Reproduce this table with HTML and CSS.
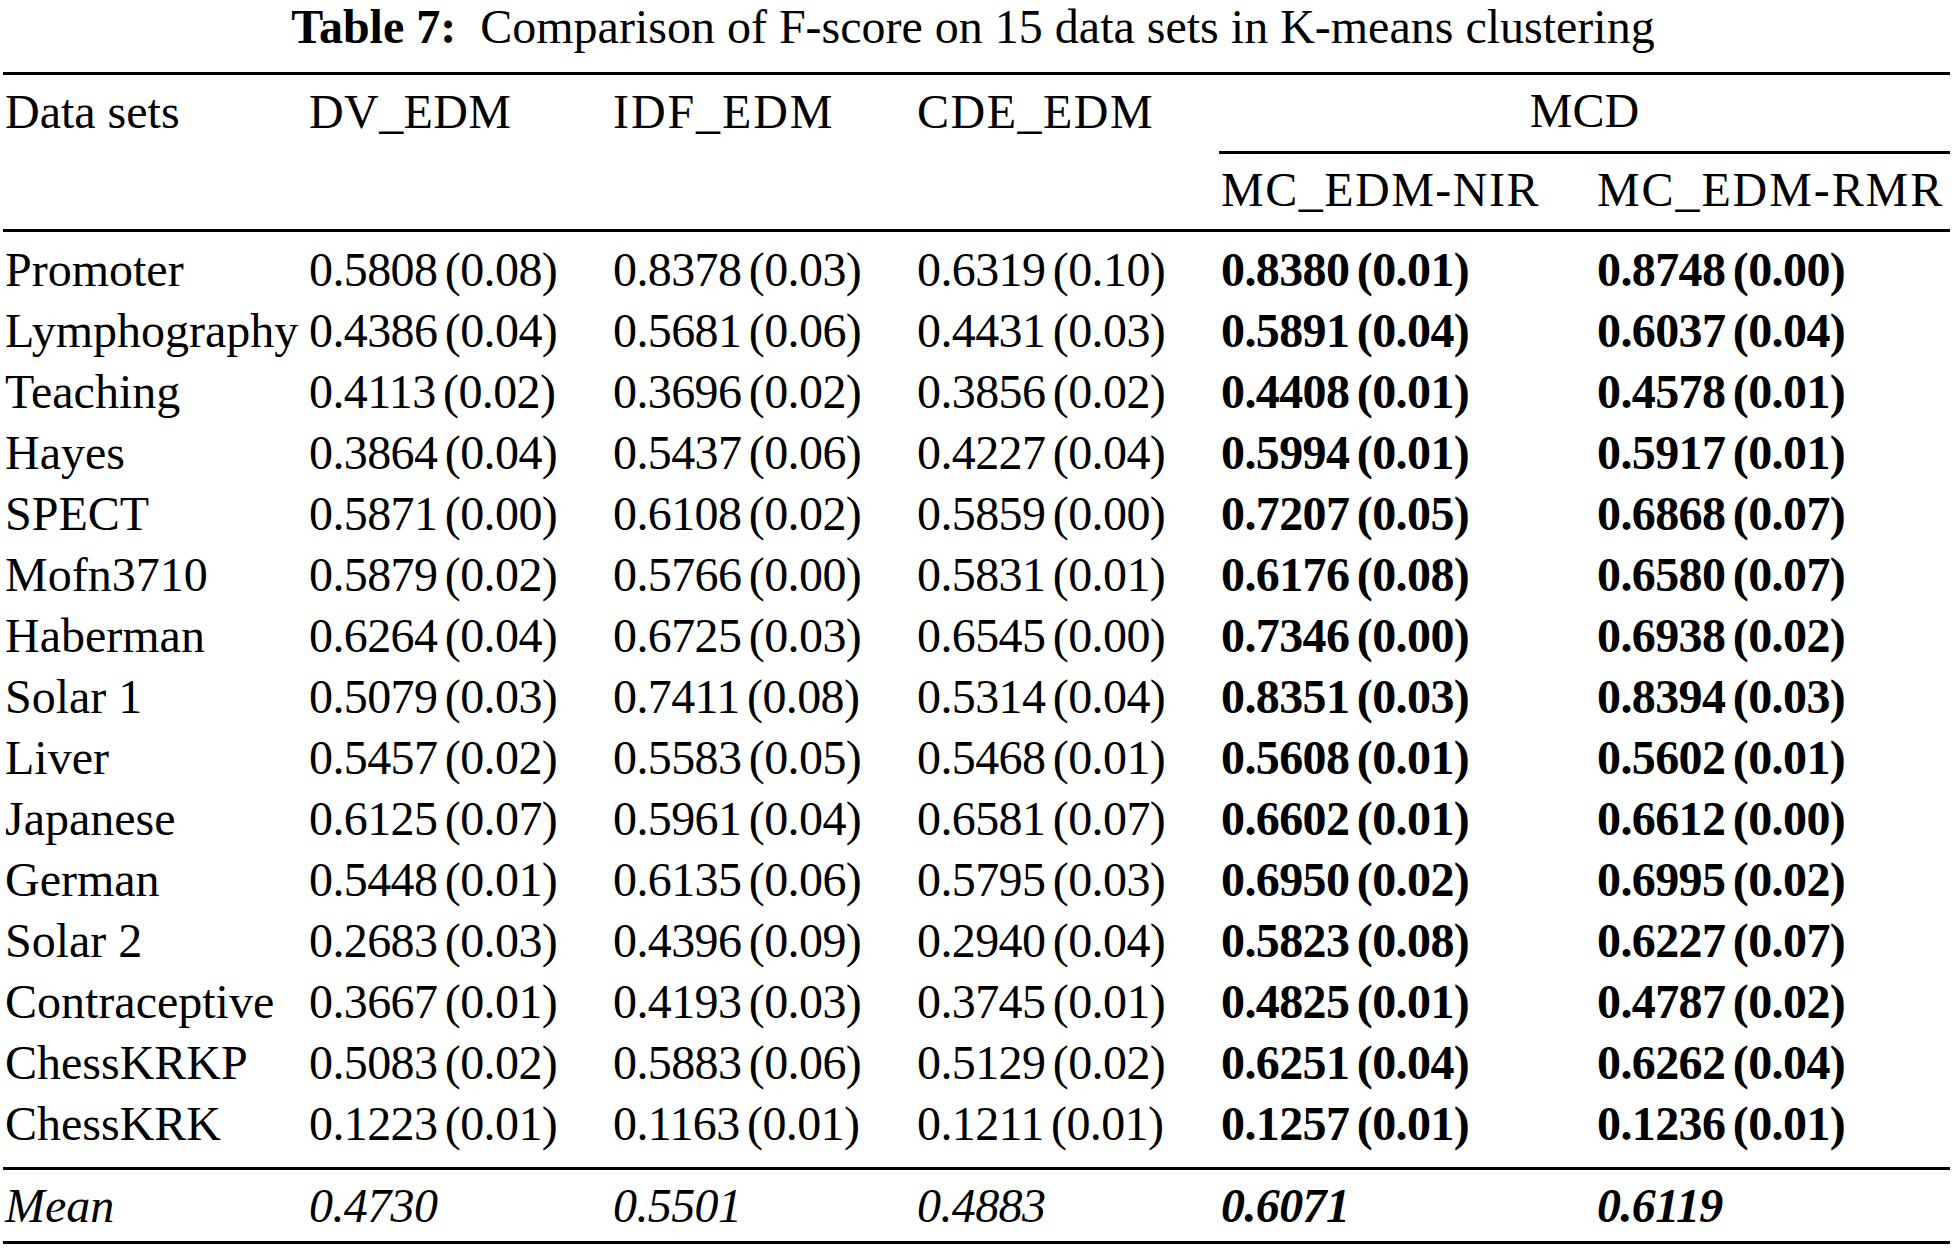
FILE: index.html
```html
<!DOCTYPE html>
<html lang="en">
<head>
<meta charset="utf-8">
<title>Table 7</title>
<link rel="stylesheet" href="styles.css">
</head>
<body>
<div class="page">
  <p class="caption"><span class="caption-label">Table 7:</span>Comparison of F-score on 15 data sets in K-means clustering</p>
  <table class="results">
    <colgroup>
      <col class="c-name">
      <col class="c-std">
      <col class="c-std">
      <col class="c-std">
      <col class="c-nir">
      <col class="c-rmr">
    </colgroup>
    <thead>
      <tr class="head-top">
        <th>Data sets</th>
        <th class="sp-s">DV_EDM</th>
        <th class="sp-l">IDF_EDM</th>
        <th class="sp-m">CDE_EDM</th>
        <th colspan="2" class="group">MCD</th>
      </tr>
      <tr class="head-sub">
        <th></th>
        <th></th>
        <th></th>
        <th></th>
        <th class="sp-m">MC_EDM-NIR</th>
        <th class="sp-l">MC_EDM-RMR</th>
      </tr>
    </thead>
    <tbody>
      <tr class="first"><td>Promoter</td><td class="num">0.5808 (0.08)</td><td class="num">0.8378 (0.03)</td><td class="num">0.6319 (0.10)</td><td class="num best">0.8380 (0.01)</td><td class="num best">0.8748 (0.00)</td></tr>
      <tr><td>Lymphography</td><td class="num">0.4386 (0.04)</td><td class="num">0.5681 (0.06)</td><td class="num">0.4431 (0.03)</td><td class="num best">0.5891 (0.04)</td><td class="num best">0.6037 (0.04)</td></tr>
      <tr><td>Teaching</td><td class="num">0.4113 (0.02)</td><td class="num">0.3696 (0.02)</td><td class="num">0.3856 (0.02)</td><td class="num best">0.4408 (0.01)</td><td class="num best">0.4578 (0.01)</td></tr>
      <tr><td>Hayes</td><td class="num">0.3864 (0.04)</td><td class="num">0.5437 (0.06)</td><td class="num">0.4227 (0.04)</td><td class="num best">0.5994 (0.01)</td><td class="num best">0.5917 (0.01)</td></tr>
      <tr><td>SPECT</td><td class="num">0.5871 (0.00)</td><td class="num">0.6108 (0.02)</td><td class="num">0.5859 (0.00)</td><td class="num best">0.7207 (0.05)</td><td class="num best">0.6868 (0.07)</td></tr>
      <tr><td>Mofn3710</td><td class="num">0.5879 (0.02)</td><td class="num">0.5766 (0.00)</td><td class="num">0.5831 (0.01)</td><td class="num best">0.6176 (0.08)</td><td class="num best">0.6580 (0.07)</td></tr>
      <tr><td>Haberman</td><td class="num">0.6264 (0.04)</td><td class="num">0.6725 (0.03)</td><td class="num">0.6545 (0.00)</td><td class="num best">0.7346 (0.00)</td><td class="num best">0.6938 (0.02)</td></tr>
      <tr><td>Solar 1</td><td class="num">0.5079 (0.03)</td><td class="num">0.7411 (0.08)</td><td class="num">0.5314 (0.04)</td><td class="num best">0.8351 (0.03)</td><td class="num best">0.8394 (0.03)</td></tr>
      <tr><td>Liver</td><td class="num">0.5457 (0.02)</td><td class="num">0.5583 (0.05)</td><td class="num">0.5468 (0.01)</td><td class="num best">0.5608 (0.01)</td><td class="num best">0.5602 (0.01)</td></tr>
      <tr><td>Japanese</td><td class="num">0.6125 (0.07)</td><td class="num">0.5961 (0.04)</td><td class="num">0.6581 (0.07)</td><td class="num best">0.6602 (0.01)</td><td class="num best">0.6612 (0.00)</td></tr>
      <tr><td>German</td><td class="num">0.5448 (0.01)</td><td class="num">0.6135 (0.06)</td><td class="num">0.5795 (0.03)</td><td class="num best">0.6950 (0.02)</td><td class="num best">0.6995 (0.02)</td></tr>
      <tr><td>Solar 2</td><td class="num">0.2683 (0.03)</td><td class="num">0.4396 (0.09)</td><td class="num">0.2940 (0.04)</td><td class="num best">0.5823 (0.08)</td><td class="num best">0.6227 (0.07)</td></tr>
      <tr><td>Contraceptive</td><td class="num">0.3667 (0.01)</td><td class="num">0.4193 (0.03)</td><td class="num">0.3745 (0.01)</td><td class="num best">0.4825 (0.01)</td><td class="num best">0.4787 (0.02)</td></tr>
      <tr><td>ChessKRKP</td><td class="num">0.5083 (0.02)</td><td class="num">0.5883 (0.06)</td><td class="num">0.5129 (0.02)</td><td class="num best">0.6251 (0.04)</td><td class="num best">0.6262 (0.04)</td></tr>
      <tr class="last"><td>ChessKRK</td><td class="num">0.1223 (0.01)</td><td class="num">0.1163 (0.01)</td><td class="num">0.1211 (0.01)</td><td class="num best">0.1257 (0.01)</td><td class="num best">0.1236 (0.01)</td></tr>
    </tbody>
    <tfoot>
      <tr class="mean"><td>Mean</td><td class="num">0.4730</td><td class="num">0.5501</td><td class="num">0.4883</td><td class="num best">0.6071</td><td class="num best">0.6119</td></tr>
    </tfoot>
  </table>
</div>
</body>
</html>
```

FILE: styles.css
```css
html, body {
  margin: 0;
  padding: 0;
  background: #ffffff;
}

body {
  font-family: "Liberation Serif", "Times New Roman", serif;
  color: #000000;
}

.page {
  width: 1954px;
}

.caption {
  margin: 0;
  padding-right: 8px;
  text-align: center;
  font-size: 48px;
  line-height: 54px;
  white-space: nowrap;
}

.caption-label {
  font-weight: bold;
  margin-right: 24px;
}

.results {
  margin: 18px 0 0 3px;
  width: 1947px;
  table-layout: fixed;
  border-collapse: collapse;
  border-top: 3px solid #000;
  border-bottom: 3px solid #000;
  font-size: 48px;
}

.c-name { width: 304px; }
.c-std { width: 304px; }
.c-nir { width: 376px; }
.c-rmr { width: 355px; }

.results th,
.results td {
  padding: 0 0 0 2px;
  text-align: left;
  vertical-align: middle;
  font-weight: normal;
  white-space: nowrap;
  overflow: visible;
}

.results .sp-s { letter-spacing: 0.4px; }
.results .sp-m { letter-spacing: 1.5px; }
.results .sp-l { letter-spacing: 1.9px; }

.results .head-top th {
  height: 71px;
  padding-bottom: 5px;
}

.results .head-top th.group {
  text-align: center;
  border-bottom: 3px solid #000;
  padding-left: 0;
}

.results .head-sub th {
  height: 71px;
  padding-bottom: 4px;
}

.head-sub {
  border-bottom: 3px solid #000;
}

.results tbody td {
  height: 58px;
  padding-bottom: 3px;
}

.results tbody tr.first td {
  padding-top: 8px;
}

.results tbody tr.last td {
  padding-bottom: 15px;
}

.results tbody tr.last {
  border-bottom: 3px solid #000;
}

.results .num {
  letter-spacing: -0.6px;
  word-spacing: -4px;
}

.results .best {
  font-weight: bold;
}

.results .mean td {
  height: 70px;
  padding-bottom: 1px;
  font-style: italic;
}
```
